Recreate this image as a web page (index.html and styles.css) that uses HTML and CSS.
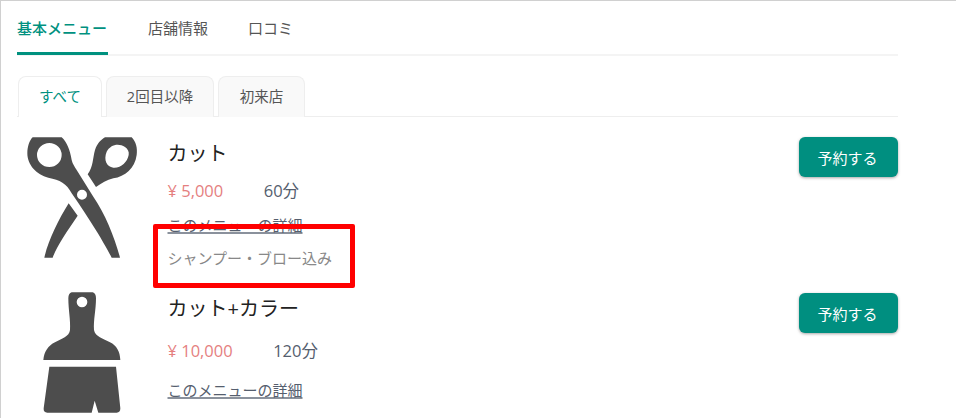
FILE: index.html
```html
<!DOCTYPE html>
<html lang="ja">
<head>
<meta charset="utf-8">
<title>メニュー</title>
<link rel="stylesheet" href="styles.css">
</head>
<body>
<div class="page">
  <nav class="main-tabs">
    <a class="main-tab active">基本メニュー</a>
    <a class="main-tab">店舗情報</a>
    <a class="main-tab">口コミ</a>
  </nav>
  <div class="sub-tabs">
    <a class="sub-tab active">すべて</a>
    <a class="sub-tab">2回目以降</a>
    <a class="sub-tab">初来店</a>
  </div>
  <section class="item">
    <svg class="thumb" viewBox="36 36 360 363" aria-hidden="true">
      <path fill-rule="evenodd" d="M68 37H155C170 50 180 75 185 105C188 118 194 125 200 135L250 215C285 265 315 340 330 398H305C280 350 250 300 185 205C170 175 150 165 115 158C80 150 52 120 52 85C52 65 58 47 68 37ZM118 54A37 36 0 1 0 118 126A37 36 0 1 0 118 54ZM216 194A15 15 0 1 0 216 224A15 15 0 1 0 216 194Z"/>
      <path fill-rule="evenodd" d="M285 37H365C378 50 383 70 380 90C375 130 345 155 310 160C290 165 275 175 258 186L233 148C250 125 248 100 255 75C262 55 272 45 285 37ZM345 66C325 52 300 60 290 80C280 105 290 125 310 128C332 130 352 112 356 90C358 80 353 72 345 66Z"/>
      <path d="M176 235L203 272C170 320 140 365 128 398H103C115 345 145 285 176 235Z"/>
    </svg>
    <div class="info">
      <h3 class="name">カット</h3>
      <p class="meta"><span class="price">¥ 5,000</span><span class="time">60分</span></p>
      <a class="detail">このメニューの詳細</a>
      <p class="note">シャンプー・ブロー込み</p>
    </div>
    <button class="reserve">予約する</button>
  </section>
  <section class="item item-open">
    <svg class="thumb" viewBox="6 36 360 363" aria-hidden="true">
      <path fill-rule="evenodd" d="M155 37H218Q228 40 228 55C228 90 220 120 222 150C225 170 250 175 270 187C290 197 300 215 301 240H70C72 215 85 197 105 187C125 175 148 170 150 150C152 120 145 90 145 55Q145 40 155 37ZM186 50A16 16 0 1 0 186 82A16 16 0 1 0 186 50Z"/>
      <path d="M88 260H288L301 385Q301 398 290 398H235L224 362L215 398H82Q70 398 71 385Z"/>
    </svg>
    <div class="info">
      <h3 class="name">カット+カラー</h3>
      <p class="meta"><span class="price">¥ 10,000</span><span class="time">120分</span></p>
      <a class="detail">このメニューの詳細</a>
    </div>
    <button class="reserve">予約する</button>
  </section>
  <div class="highlight"></div>
</div>
</body>
</html>
```
FILE: styles.css
```css
* { box-sizing: border-box; }
html, body { margin: 0; height: 100%; overflow: hidden; background: #fff; }
body { font-family: "Open Sans", "Noto Sans CJK JP", sans-serif; }
.page {
  position: relative;
  height: 418px;
  border-top: 1px solid #d0d0d0;
  border-left: 1px solid #d0d0d0;
  padding: 0 58px 0 16px;
  overflow: hidden;
}
.main-tabs {
  display: flex;
  gap: 40px;
  height: 55px;
  border-bottom: 2px solid #f4f4f4;
}
.main-tab {
  height: 54px;
  line-height: 54px;
  font-size: 15px;
  color: #555;
}
.main-tab.active {
  width: 91px;
  color: #00917f;
  font-weight: 500;
  border-bottom: 3px solid #00917f;
}
.sub-tabs {
  display: flex;
  gap: 4px;
  height: 41px;
  margin-top: 20px;
  padding-left: 1px;
  border-bottom: 1px solid #eee;
}
.sub-tab {
  flex: none;
  height: 41px;
  line-height: 40px;
  text-align: center;
  font-size: 14.5px;
  color: #555;
  background: #f9f9f9;
  border: 1px solid #eee;
  border-bottom: 0;
  border-radius: 8px 8px 0 0;
}
.sub-tab:nth-child(1) { width: 84px; }
.sub-tab:nth-child(2) { width: 108px; }
.sub-tab:nth-child(3) { width: 87px; }
.sub-tab.active { color: #00917f; background: #fff; position: relative; z-index: 1; }
.item {
  display: flex;
  align-items: flex-start;
  height: 155px;
  padding-top: 20px;
}
.thumb {
  flex: none;
  width: 120px;
  height: 121px;
  margin: 0 25.5px 0 5px;
  fill: #4d4d4d;
}
.info { flex: 1; min-width: 0; padding-top: 2px; }
.name {
  margin: 0;
  font-size: 20px;
  font-weight: 400;
  line-height: 30px;
  color: #222;
}
.meta {
  display: flex;
  margin: 10px 0 0;
  font-size: 16.5px;
  line-height: 24px;
}
.item-open .meta { margin-top: 15px; }
.item-open .detail { margin-top: 16px; }
.price { color: #e57f7f; margin-right: 40.5px; }
.time { color: #555e6e; }
.detail {
  display: block;
  width: max-content;
  margin-top: 11px;
  font-size: 15px;
  line-height: 22px;
  color: #555e6e;
  text-decoration: underline;
  text-decoration-color: #8a919c;
  text-decoration-thickness: 2px;
}
.note {
  margin: 11px 0 0;
  font-size: 15px;
  line-height: 22px;
  color: #888;
}
.reserve {
  flex: none;
  width: 99px;
  height: 40px;
  padding: 0 2px 0 0;
  border: 0;
  border-radius: 6px;
  background: #008f80;
  color: #fff;
  font: inherit;
  font-size: 15px;
  box-shadow: 0 1px 3px rgba(0, 0, 0, .35);
}
.item-open .reserve { margin-top: 1px; }
.highlight {
  position: absolute;
  left: 152px;
  top: 223px;
  width: 202px;
  height: 64px;
  border: 5px solid #f00;
  border-radius: 2px;
}
```
